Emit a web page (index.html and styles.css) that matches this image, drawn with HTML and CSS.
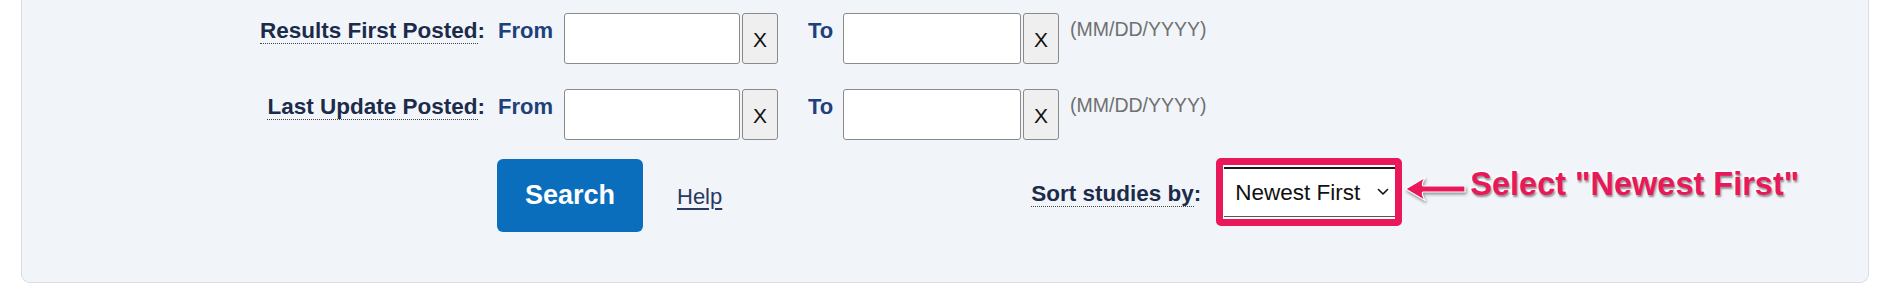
FILE: index.html
```html
<!DOCTYPE html>
<html lang="en">
<head>
<meta charset="utf-8">
<title>Search form</title>
<link rel="stylesheet" href="styles.css">
</head>
<body>
<div class="panel">
  <div class="row">
    <div class="label"><span class="term">Results First Posted</span>:</div>
    <div class="sub from">From</div>
    <div class="date-group">
      <input class="date" type="text" aria-label="Results First Posted from">
      <button class="clear" type="button">X</button>
    </div>
    <div class="sub to">To</div>
    <div class="date-group">
      <input class="date date-wide" type="text" aria-label="Results First Posted to">
      <button class="clear" type="button">X</button>
    </div>
    <div class="hint">(MM/DD/YYYY)</div>
  </div>
  <div class="row row-second">
    <div class="label"><span class="term">Last Update Posted</span>:</div>
    <div class="sub from">From</div>
    <div class="date-group">
      <input class="date" type="text" aria-label="Last Update Posted from">
      <button class="clear" type="button">X</button>
    </div>
    <div class="sub to">To</div>
    <div class="date-group">
      <input class="date date-wide" type="text" aria-label="Last Update Posted to">
      <button class="clear" type="button">X</button>
    </div>
    <div class="hint">(MM/DD/YYYY)</div>
  </div>
  <div class="actions">
    <button class="search" type="button">Search</button>
    <a class="help" href="#">Help</a>
    <div class="sort-label"><span class="term">Sort studies by</span>:</div>
    <div class="highlight">
      <div class="select-wrap">
        <select class="sort-select" aria-label="Sort studies by">
          <option>Newest First</option>
          <option>Relevance</option>
        </select>
        <svg class="chevron" width="12" height="8" viewBox="0 0 12 8" aria-hidden="true"><path d="M1.5 1.5 L6 6 L10.5 1.5" fill="none" stroke="#111" stroke-width="1.6" stroke-linecap="round" stroke-linejoin="round"/></svg>
      </div>
    </div>
    <svg class="pointer" width="64" height="28" viewBox="0 0 64 28" aria-hidden="true">
      <path d="M1.5 14 L21 2.5 Q17 10 19 11 L61 11 L61 17 L19 17 Q17 18 21 25.5 Z" fill="#e8185a" stroke="#ffffff" stroke-width="1.2" stroke-linejoin="round"/>
    </svg>
    <div class="note">Select "Newest First"</div>
  </div>
</div>
</body>
</html>
```

FILE: styles.css
```css
* { box-sizing: border-box; }

html, body {
  margin: 0;
  padding: 0;
  background: #ffffff;
}

body {
  font-family: "Liberation Sans", Arial, sans-serif;
  width: 1877px;
  height: 285px;
  overflow: hidden;
}

.panel {
  margin-left: 21px;
  width: 1848px;
  height: 283px;
  background: #f1f5fa;
  border: 1px solid #d9dde3;
  border-top: none;
  border-radius: 0 0 9px 9px;
  padding-top: 13px;
}

.row {
  display: flex;
  align-items: flex-start;
  height: 51px;
}

.row-second {
  margin-top: 25px;
}

.label {
  width: 463px;
  text-align: right;
  font-size: 22.5px;
  line-height: 25px;
  font-weight: bold;
  color: #1c2b4a;
  padding-top: 5px;
}

.term {
  border-bottom: 1px dotted #444;
}

.sub {
  font-size: 22px;
  line-height: 25px;
  font-weight: bold;
  color: #20407a;
  padding-top: 5px;
}

.from {
  margin-left: 13px;
  width: 66px;
}

.to {
  margin-left: 30px;
  width: 35px;
}

.date-group {
  display: flex;
  gap: 2px;
}

.date {
  width: 176px;
  height: 51px;
  background: #ffffff;
  border: 1px solid #8a8a8a;
  border-radius: 3px;
  margin: 0;
  padding: 0 8px;
  font-family: inherit;
  font-size: 20px;
}

.date-wide {
  width: 178px;
}

.clear {
  width: 36px;
  height: 51px;
  margin: 0;
  padding: 3px 0 0;
  background: #efefef;
  border: 1px solid #8a8a8a;
  border-radius: 3px;
  font-family: inherit;
  font-size: 21px;
  color: #111;
  display: flex;
  align-items: center;
  justify-content: center;
}

.hint {
  margin-left: 11px;
  font-size: 19.5px;
  line-height: 22px;
  color: #707070;
  padding-top: 5px;
}

.actions {
  display: flex;
  align-items: flex-start;
  margin-top: 18px;
  padding-left: 475px;
}

.search {
  margin: 1px 0 0;
  width: 146px;
  height: 73px;
  background: #0a6ebd;
  color: #ffffff;
  border: none;
  border-radius: 6px;
  font-family: inherit;
  font-size: 27px;
  font-weight: bold;
  padding: 0;
}

.help {
  margin-left: 34px;
  margin-top: 26px;
  font-size: 22px;
  line-height: 25px;
  color: #2a3960;
  text-decoration: underline;
  text-decoration-thickness: 1.5px;
  text-underline-offset: 4px;
}

.sort-label {
  margin-left: 309px;
  margin-top: 23px;
  font-size: 22.5px;
  line-height: 25px;
  font-weight: bold;
  color: #1c2b4a;
}

.highlight {
  margin-left: 15px;
  border: 7px solid #e8185a;
  border-radius: 5px;
  padding: 2px 0 2px 1px;
  background: #ffffff;
}

.select-wrap {
  position: relative;
  width: 171px;
  height: 50px;
}

.sort-select {
  appearance: none;
  -webkit-appearance: none;
  width: 171px;
  height: 50px;
  margin: 0;
  padding: 0 0 0 11px;
  background: #ffffff;
  border: none;
  border-top: 2px solid #1a1a1a;
  border-bottom: 1px solid #555;
  border-radius: 0;
  font-family: inherit;
  font-size: 22.5px;
  color: #111;
}

.chevron {
  position: absolute;
  left: 153px;
  top: 21px;
  pointer-events: none;
}

.pointer {
  margin-left: 2px;
  margin-top: 17px;
  filter: drop-shadow(1px 2px 1.5px rgba(0,0,0,0.4));
}

.note {
  margin-left: 2px;
  margin-top: 8px;
  font-size: 32.5px;
  line-height: 37px;
  font-weight: bold;
  color: #e8185a;
  -webkit-text-stroke: 3px #ffffff;
  paint-order: stroke fill;
  text-shadow: 1px 2px 2px rgba(0,0,0,0.45);
}
```
